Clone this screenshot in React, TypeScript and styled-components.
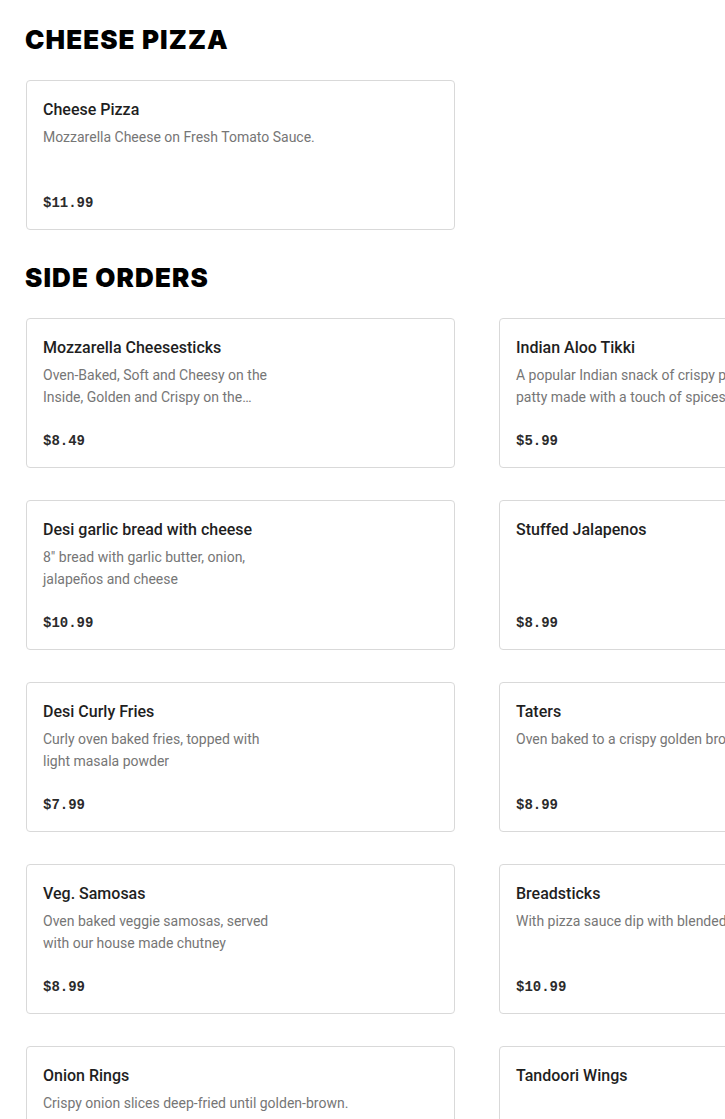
import React from 'react'
import styled, { createGlobalStyle } from 'styled-components'

const GlobalStyle = createGlobalStyle`
  html, body {
    margin: 0;
    padding: 0;
    background: #fff;
    overflow-x: hidden;
  }
  body {
    font-family: Roboto, "Noto Sans", Arial, sans-serif;
    color: #191919;
  }
`

const Page = styled.div`
  padding: 24px 0 0 26px;
  width: 928px;
`

const Section = styled.section`
  & + & {
    margin-top: 32px;
  }
`

const Heading = styled.h2`
  margin: 0 0 24px -1px;
  font-family: Inter, "Liberation Sans", sans-serif;
  font-size: 26px;
  line-height: 32px;
  font-weight: 900;
  letter-spacing: 1.1px;
  color: #000;
`

const Grid = styled.div`
  display: grid;
  grid-template-columns: 429px 429px;
  column-gap: 44px;
  row-gap: 32px;
`

const Card = styled.div`
  box-sizing: border-box;
  height: 150px;
  padding: 18px 16px 16px;
  border: 1px solid #d9d9d9;
  border-radius: 4px;
  display: flex;
  flex-direction: column;
  background: #fff;
`

const Title = styled.div`
  font-size: 16px;
  line-height: 22px;
  font-weight: 500;
  color: #1f1f1f;
`

const Description = styled.div`
  margin-top: 5px;
  font-size: 14px;
  line-height: 22px;
  color: #767676;
  white-space: pre-line;
`

const Price = styled.div`
  margin-top: auto;
  font-family: "Liberation Mono", "DejaVu Sans Mono", monospace;
  font-size: 14px;
  line-height: 20px;
  font-weight: 700;
  color: #2b2b2b;
`

type Item = { name: string; desc?: string; price: string }

const cheese: Item[] = [
  { name: 'Cheese Pizza', desc: 'Mozzarella Cheese on Fresh Tomato Sauce.', price: '$11.99' },
]

const sides: Item[] = [
  {
    name: 'Mozzarella Cheesesticks',
    desc: 'Oven-Baked, Soft and Cheesy on the\nInside, Golden and Crispy on the…',
    price: '$8.49',
  },
  {
    name: 'Indian Aloo Tikki',
    desc: 'A popular Indian snack of crispy potato\npatty made with a touch of spices',
    price: '$5.99',
  },
  {
    name: 'Desi garlic bread with cheese',
    desc: '8" bread with garlic butter, onion,\njalapeños and cheese',
    price: '$10.99',
  },
  { name: 'Stuffed Jalapenos', price: '$8.99' },
  {
    name: 'Desi Curly Fries',
    desc: 'Curly oven baked fries, topped with\nlight masala powder',
    price: '$7.99',
  },
  { name: 'Taters', desc: 'Oven baked to a crispy golden brown.', price: '$8.99' },
  {
    name: 'Veg. Samosas',
    desc: 'Oven baked veggie samosas, served\nwith our house made chutney',
    price: '$8.99',
  },
  {
    name: 'Breadsticks',
    desc: 'With pizza sauce dip with blended spices.',
    price: '$10.99',
  },
  {
    name: 'Onion Rings',
    desc: 'Crispy onion slices deep-fried until golden-brown.',
    price: '$7.99',
  },
  { name: 'Tandoori Wings', price: '$10.99' },
]

const MenuCard = ({ item }: { item: Item }) => (
  <Card>
    <Title>{item.name}</Title>
    {item.desc ? <Description>{item.desc}</Description> : null}
    <Price>{item.price}</Price>
  </Card>
)

export default function App() {
  return (
    <Page>
      <GlobalStyle />
      <Section>
        <Heading>CHEESE PIZZA</Heading>
        <Grid>
          {cheese.map((item) => (
            <MenuCard key={item.name} item={item} />
          ))}
        </Grid>
      </Section>
      <Section>
        <Heading>SIDE ORDERS</Heading>
        <Grid>
          {sides.map((item) => (
            <MenuCard key={item.name} item={item} />
          ))}
        </Grid>
      </Section>
    </Page>
  )
}
